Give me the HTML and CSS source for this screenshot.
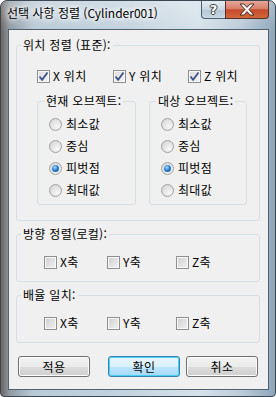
FILE: index.html
```html
<!DOCTYPE html>
<html lang="ko">
<head>
  <meta charset="UTF-8">
  <title>선택 사항 정렬</title>
  <link rel="stylesheet" href="styles.css">
</head>
<body>

  <div class="window">
    <!-- Barra de título -->
    <div class="titlebar">
      <span class="title">선택 사항 정렬 (Cylinder001)</span>
      <div class="caption-buttons">
        <span class="cap-btn help">?</span>
        <span class="cap-btn close">
          <svg width="18" height="13" viewBox="0 0 18 13">
            <path d="M2 1h3.8L9 4.4 12.2 1H16l-5 5.5 5 5.5h-3.8L9 8.6 5.8 12H2l5-5.5z" fill="#fff" stroke="#4a2a20" stroke-width="1"/>
          </svg>
        </span>
      </div>
    </div>

    <div class="client">

      <fieldset class="group">
        <legend>위치 정렬 (표준):</legend>
        <div class="axis-row pos-axes">
          <label class="check"><span class="box"><svg width="11" height="11" viewBox="0 0 11 11"><path d="M1.5 5.5l2.6 3.2L9.5 1.5" fill="none" stroke="#3a4f8c" stroke-width="1.8"/></svg></span>X 위치</label>
          <label class="check"><span class="box"><svg width="11" height="11" viewBox="0 0 11 11"><path d="M1.5 5.5l2.6 3.2L9.5 1.5" fill="none" stroke="#3a4f8c" stroke-width="1.8"/></svg></span>Y 위치</label>
          <label class="check"><span class="box"><svg width="11" height="11" viewBox="0 0 11 11"><path d="M1.5 5.5l2.6 3.2L9.5 1.5" fill="none" stroke="#3a4f8c" stroke-width="1.8"/></svg></span>Z 위치</label>
        </div>

        <div class="obj-groups">
          <fieldset class="group inner">
            <legend>현재 오브젝트:</legend>
            <div class="radio-list">
              <label class="radio"><span class="dot"></span>최소값</label>
              <label class="radio"><span class="dot"></span>중심</label>
              <label class="radio"><span class="dot on"></span>피벗점</label>
              <label class="radio"><span class="dot"></span>최대값</label>
            </div>
          </fieldset>
          <fieldset class="group inner">
            <legend>대상 오브젝트:</legend>
            <div class="radio-list">
              <label class="radio"><span class="dot"></span>최소값</label>
              <label class="radio"><span class="dot"></span>중심</label>
              <label class="radio"><span class="dot on"></span>피벗점</label>
              <label class="radio"><span class="dot"></span>최대값</label>
            </div>
          </fieldset>
        </div>
      </fieldset>

      <fieldset class="group">
        <legend>방향 정렬(로컬):</legend>
        <div class="axis-row small-axes">
          <label class="check"><span class="box empty"></span>X축</label>
          <label class="check"><span class="box empty"></span>Y축</label>
          <label class="check"><span class="box empty"></span>Z축</label>
        </div>
      </fieldset>

      <fieldset class="group">
        <legend>배율 일치:</legend>
        <div class="axis-row small-axes">
          <label class="check"><span class="box empty"></span>X축</label>
          <label class="check"><span class="box empty"></span>Y축</label>
          <label class="check"><span class="box empty"></span>Z축</label>
        </div>
      </fieldset>

      <div class="buttons">
        <button class="btn">적용</button>
        <button class="btn default">확인</button>
        <button class="btn">취소</button>
      </div>

    </div>
  </div>

</body>
</html>
```

FILE: styles.css
```css
body {
  margin: 0;
  background-color: #fff;
  font-family: "Noto Sans CJK KR", "Noto Sans", sans-serif;
  font-size: 12px;
  color: #000;
}

.window {
  width: 276px;
  height: 397px;
  box-sizing: border-box;
  border: 1px solid #3b4752;
  border-radius: 7px 7px 4px 4px;
  background:
    linear-gradient(to bottom, rgba(255,255,255,0.25), rgba(255,255,255,0) 30px),
    linear-gradient(to right, #6e6560 0, #8f9aa3 3%, #b9cad7 12%, #c3d3df 45%, #d6e2ea 72%, #bccbd8 88%, #8ea6ba 100%);
  display: flex;
  flex-direction: column;
  overflow: hidden;
}

/* Barra de título */
.titlebar {
  height: 28px;
  display: flex;
  justify-content: space-between;
  align-items: flex-start;
  padding-left: 6px;
}

.title {
  margin-top: 4px;
  font-size: 12px;
  line-height: 16px;
  color: #000;
  text-shadow: 0 0 6px #fff, 0 0 10px #fff, 0 0 4px #fff;
}

.caption-buttons {
  display: flex;
  margin-right: 6px;
}

.cap-btn {
  height: 18px;
  box-sizing: border-box;
  display: flex;
  align-items: center;
  justify-content: center;
  border: 1px solid #4d5f70;
  border-top: none;
}

.help {
  width: 24px;
  border-radius: 0 0 0 4px;
  border-right: none;
  background: linear-gradient(to bottom, #e4ecf2 0, #c9d7e2 50%, #b3c5d3 51%, #c8d8e4 100%);
  color: #fff;
  font-family: "DejaVu Sans", sans-serif;
  font-weight: bold;
  font-size: 13px;
  text-shadow: 0 0 1px #333, 1px 0 0 #444, -1px 0 0 #444, 0 1px 0 #444, 0 -1px 0 #444;
}

.close {
  width: 44px;
  border-color: #5a2e24;
  border-radius: 0 0 4px 0;
  background: linear-gradient(to bottom, #e6a797 0, #d6806c 45%, #c44a2c 52%, #d2683c 100%);
}

/* Área de cliente */
.client {
  flex: 1;
  margin: 0 6px 6px 7px;
  border: 1px solid #4f6272;
  background-color: #f0f0f0;
  padding-top: 8px;
  letter-spacing: 0.3px;
}

.group {
  margin: 0 8px 0 7px;
  padding: 0;
  min-width: 0;
  border: 1px solid #d5dfe5;
  border-radius: 3px;
}

.group + .group {
  margin-top: 6px;
}

.group legend {
  margin-left: 4px;
  padding: 0 2px;
  line-height: 14px;
}

.axis-row {
  display: grid;
  height: 14px;
}

.pos-axes {
  grid-template-columns: 76px 75px auto;
  padding: 17px 0 0 20px;
}

.small-axes {
  grid-template-columns: 63px 69px auto;
  padding: 14px 0 12px 27px;
}

.check, .radio {
  display: flex;
  align-items: center;
  gap: 3px;
  line-height: 14px;
  white-space: nowrap;
}

.box {
  width: 13px;
  height: 13px;
  box-sizing: border-box;
  border: 1px solid #8f8f8f;
  background: linear-gradient(135deg, #dcdcdc 0, #f4f4f4 100%);
  box-shadow: inset 0 0 0 1px #f6f6f6;
  display: flex;
  align-items: center;
  justify-content: center;
}

.box.empty {
  background: linear-gradient(135deg, #cfcfcf 0, #f2f2f2 100%);
  box-shadow: inset 0 0 0 1px #f8f8f8;
}

.obj-groups {
  display: grid;
  grid-template-columns: 99px 98px;
  gap: 13px;
  padding: 11px 13px 15px 20px;
}

.group.inner {
  margin: 0;
}

.group.inner legend {
  margin-left: 6px;
}

.radio-list {
  padding: 5px 0 3px 11px;
}

.radio {
  height: 22px;
  gap: 4px;
}

.dot {
  width: 13px;
  height: 13px;
  box-sizing: border-box;
  border-radius: 50%;
  border: 1px solid #a2a2a2;
  background: radial-gradient(circle at 65% 70%, #f7f7f7 0, #e0e0e0 60%, #d0d0d0 100%);
  display: flex;
  align-items: center;
  justify-content: center;
}

.dot.on::after {
  content: "";
  width: 7px;
  height: 7px;
  border-radius: 50%;
  background: radial-gradient(circle at 40% 35%, #a9dcff 0, #2b86d6 45%, #0b3f8a 100%);
}

/* Botones */
.buttons {
  display: flex;
  margin-top: 13px;
  padding-left: 9px;
}

.btn {
  width: 72px;
  height: 21px;
  padding: 0;
  font-family: inherit;
  font-size: 12px;
  letter-spacing: 0.5px;
  color: #000;
  border: 1px solid #707070;
  border-radius: 3px;
  background: linear-gradient(to bottom, #f2f2f2 0, #ebebeb 50%, #dddddd 51%, #cfcfcf 100%);
  box-shadow: inset 0 0 0 1px #fcfcfc;
}

.btn.default {
  margin-left: 18px;
  border-color: #3c7fb1;
  background: linear-gradient(to bottom, #eaf6fd 0, #d9f0fc 50%, #bee6fd 51%, #a7d9f5 100%);
  box-shadow: inset 0 0 0 1px #48d2fa;
}

.btn.default + .btn {
  margin-left: 6px;
}
```
